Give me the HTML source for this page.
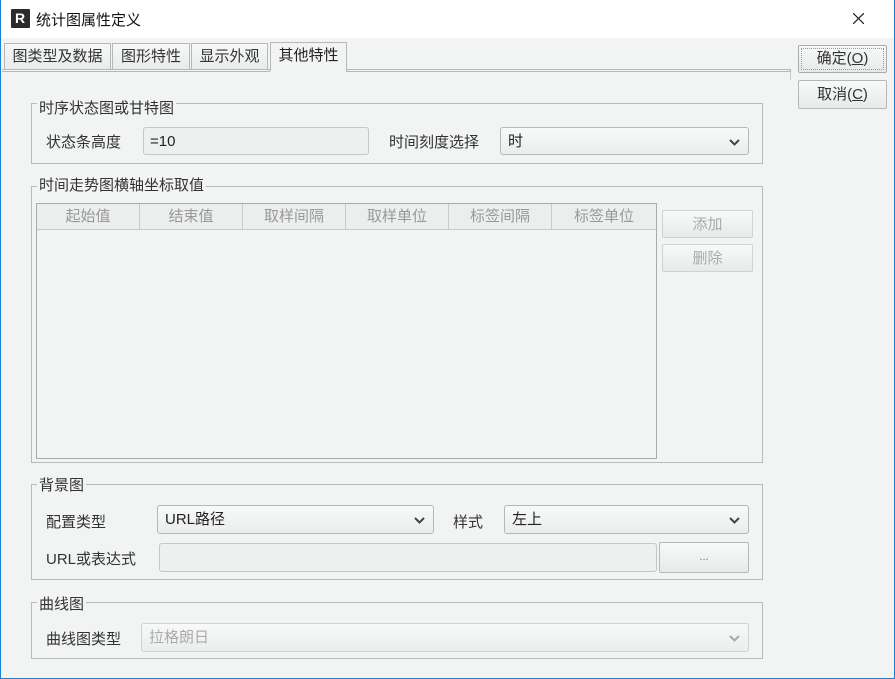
<!DOCTYPE html>
<html><head><meta charset="utf-8"><style>
*{box-sizing:border-box;margin:0;padding:0}
body{width:895px;height:679px;background:#f2f3f3;font-family:"Liberation Sans","Noto Sans CJK SC",sans-serif;font-size:15px;color:#222;position:relative;overflow:hidden}
.a{position:absolute}
.win{left:0;top:0;width:895px;height:679px;border:1px solid #1a80d8;border-top:none}
.title{left:1px;top:0;width:893px;height:38px;background:#fff}
.tab{top:43px;height:27px;border:1px solid #b4b8ba;border-bottom:none;background:linear-gradient(#f6f7f7,#e9ebeb);text-align:center;line-height:26px;font-size:15px;color:#333}
.grp{border:1px solid #b8babb}
.gt{background:#f2f3f3;padding:0 2px;font-size:15px;color:#333;line-height:16px}
.inp{border:1px solid #c4c7c8;border-radius:3px;background:#eef0f0;padding-left:6px;line-height:27px}
.sel{border:1px solid #b4b8ba;border-radius:3px;background:linear-gradient(#f8f9f9,#ebeded);padding-left:7px;line-height:28px}
.sel svg{position:absolute;right:8px;top:11px}
.btn{border:1px solid #b4b8ba;border-radius:2px;background:linear-gradient(#f8f9f9,#e8eaea);text-align:center;line-height:25px;color:#333}
.dis{color:#aaa}
.lbl{color:#333}
.th{top:0;height:25px;border-right:1px solid #c8cbcc;text-align:center;line-height:25px;color:#999;font-size:15px}
</style></head><body>
<div class="a title"></div>
<div class="a" style="left:11px;top:9px;width:19px;height:19px;background:#2b2b2b;border-radius:1px"><div class="a" style="left:4px;top:2px;color:#fff;font:bold 14px 'Liberation Sans';line-height:14px">R</div></div>
<div class="a" style="left:36px;top:9px;font-size:15px;color:#111">统计图属性定义</div>
<svg class="a" style="left:853px;top:13px" width="11" height="11"><path d="M0 0L11 11M11 0L0 11" stroke="#222" stroke-width="1.2"/></svg>
<div class="a win"></div>

<div class="a tab" style="left:4px;width:107px">图类型及数据</div>
<div class="a tab" style="left:112px;width:78px">图形特性</div>
<div class="a tab" style="left:191px;width:77px">显示外观</div>
<div class="a tab" style="left:270px;width:77px;background:#f2f3f3;top:42px;height:29px;color:#222">其他特性</div>
<div class="a" style="left:2px;top:69px;width:268px;border-top:1px solid #b4b8ba;border-bottom:1px solid #b4b8ba;height:3px"></div>
<div class="a" style="left:346px;top:69px;width:445px;border-top:1px solid #b4b8ba;border-bottom:1px solid #b4b8ba;border-right:1px solid #b4b8ba;height:3px"></div>
<div class="a" style="left:790px;top:72px;height:8px;border-left:1px solid #c8cbcc"></div>

<div class="a btn" style="left:798px;top:45px;width:89px;height:28px;border-color:#a8acae;line-height:26px">确定(<u>O</u>)</div>
<div class="a" style="left:801px;top:48px;width:83px;height:22px;border:1px dotted #999"></div>
<div class="a btn" style="left:798px;top:80px;width:89px;height:29px;line-height:27px">取消(<u>C</u>)</div>

<!-- G1 -->
<div class="a grp" style="left:31px;top:103px;width:732px;height:61px"></div>
<div class="a gt" style="left:37px;top:101px">时序状态图或甘特图</div>
<div class="a lbl" style="left:46px;top:131px">状态条高度</div>
<div class="a inp" style="left:143px;top:127px;width:226px;height:28px">=10</div>
<div class="a lbl" style="left:389px;top:131px">时间刻度选择</div>
<div class="a sel" style="left:500px;top:127px;width:249px;height:28px">时<svg width="11" height="7"><path d="M1 1L5.5 5.5L10 1" stroke="#444" stroke-width="2" fill="none"/></svg></div>

<!-- G2 -->
<div class="a grp" style="left:31px;top:186px;width:732px;height:277px"></div>
<div class="a gt" style="left:37px;top:178px">时间走势图横轴坐标取值</div>
<div class="a" style="left:36px;top:203px;width:621px;height:256px;border:1px solid #a8acae;background:#f2f3f3">
<div class="a" style="left:0;top:0;width:619px;height:26px;background:#eceeee;border-bottom:1px solid #c8cbcc"></div>
<div class="a th" style="left:0;width:103px">起始值</div>
<div class="a th" style="left:103px;width:103px">结束值</div>
<div class="a th" style="left:206px;width:103px">取样间隔</div>
<div class="a th" style="left:309px;width:103px">取样单位</div>
<div class="a th" style="left:412px;width:103px">标签间隔</div>
<div class="a th" style="left:515px;width:104px;border-right:none">标签单位</div>
</div>
<div class="a btn dis" style="left:662px;top:210px;width:91px;height:28px;border-color:#d0d3d4;line-height:27px">添加</div>
<div class="a btn dis" style="left:662px;top:244px;width:91px;height:28px;border-color:#d0d3d4;line-height:27px">删除</div>

<!-- G3 -->
<div class="a grp" style="left:31px;top:484px;width:732px;height:96px"></div>
<div class="a gt" style="left:37px;top:478px">背景图</div>
<div class="a lbl" style="left:46px;top:511px">配置类型</div>
<div class="a sel" style="left:157px;top:505px;width:277px;height:29px">URL路径<svg width="11" height="7"><path d="M1 1L5.5 5.5L10 1" stroke="#444" stroke-width="2" fill="none"/></svg></div>
<div class="a lbl" style="left:453px;top:511px">样式</div>
<div class="a sel" style="left:504px;top:505px;width:245px;height:29px">左上<svg width="11" height="7"><path d="M1 1L5.5 5.5L10 1" stroke="#444" stroke-width="2" fill="none"/></svg></div>
<div class="a lbl" style="left:46px;top:548px">URL或表达式</div>
<div class="a inp" style="left:159px;top:543px;width:498px;height:29px"></div>
<div class="a btn" style="left:659px;top:542px;width:90px;height:31px;line-height:29px;font-size:11px;color:#777">...</div>

<!-- G4 -->
<div class="a grp" style="left:31px;top:602px;width:732px;height:57px"></div>
<div class="a gt" style="left:37px;top:597px">曲线图</div>
<div class="a lbl" style="left:46px;top:628px">曲线图类型</div>
<div class="a sel dis" style="left:141px;top:623px;width:608px;height:29px;border-color:#d0d3d4">拉格朗日<svg width="11" height="7"><path d="M1 1L5.5 5.5L10 1" stroke="#aaa" stroke-width="2" fill="none"/></svg></div>
</body></html>
